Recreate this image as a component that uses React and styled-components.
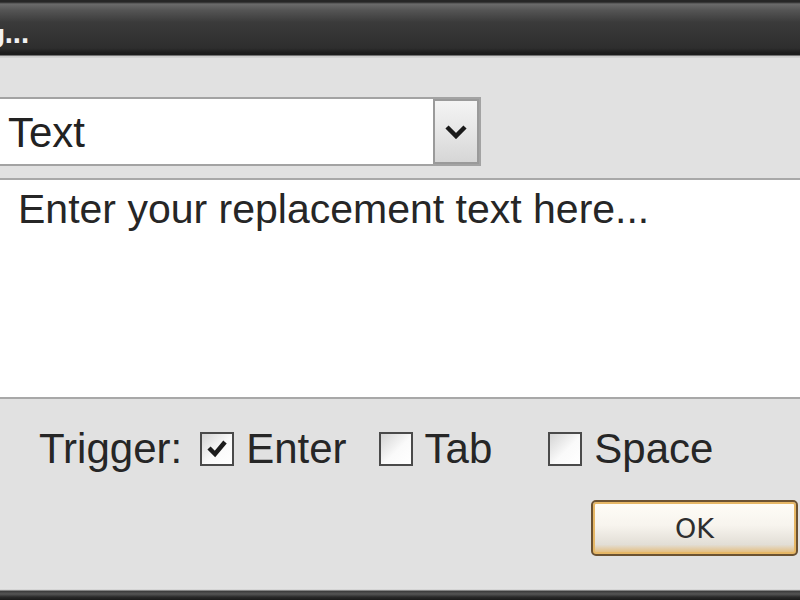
import React from 'react';
import styled, { createGlobalStyle } from 'styled-components';

const GlobalStyle = createGlobalStyle`
  html, body {
    margin: 0;
    padding: 0;
    background: #e1e1e1;
    overflow: hidden;
  }
  * {
    box-sizing: border-box;
  }
`;

const Window = styled.div`
  width: 800px;
  height: 600px;
  display: flex;
  flex-direction: column;
  overflow: hidden;
  background: #e1e1e1;
  font-family: 'Liberation Sans', Arial, sans-serif;
  color: #1e1e1e;
`;

const TitleBar = styled.div`
  height: 58px;
  flex: none;
  display: flex;
  align-items: center;
  padding-top: 12px;
  background: linear-gradient(
    to bottom,
    #262626 0px,
    #262626 2px,
    #6a6a6a 4px,
    #555 10px,
    #3b3b3b 22px,
    #2e2e2e 48px,
    #1c1c1c 53px,
    #1c1c1c 55px,
    #c9c9c9 56px,
    #d6d6d6 58px
  );
`;

const Title = styled.span`
  color: #f2f2f2;
  font-family: 'DejaVu Sans', sans-serif;
  font-weight: bold;
  font-size: 24px;
  margin-left: -12px;
  letter-spacing: -1px;
`;

const Body = styled.div`
  flex: 1;
  display: flex;
  flex-direction: column;
  padding-top: 39px;
`;

const Select = styled.div`
  width: 481px;
  height: 69px;
  display: flex;
  align-items: stretch;
  background: #fff;
  border: 2px solid #a3a3a3;
  border-left: none;
`;

const SelectValue = styled.div`
  flex: 1;
  display: flex;
  align-items: center;
  padding-left: 8px;
  padding-top: 2px;
  font-size: 42px;
  color: #222;
`;

const DropButton = styled.div`
  width: 46px;
  display: flex;
  align-items: center;
  justify-content: center;
  border: 2px solid #9a9a9a;
  background: linear-gradient(to bottom, #f4f4f4, #e6e6e6 50%, #d6d6d6);
`;

const TextArea = styled.div`
  margin-top: 12px;
  width: 820px;
  height: 221px;
  background: #fff;
  border: 2px solid #a8a8a8;
  border-left: none;
  padding: 6px 0 0 18px;
  font-size: 41px;
  color: #262626;
`;

const TriggerRow = styled.div`
  margin-top: 30px;
  display: flex;
  align-items: center;
  padding-left: 39px;
  font-size: 42px;
  color: #262626;
  height: 40px;
`;

const Label = styled.span`
  margin-right: ${(p) => p.$gap || 0}px;
`;

const Box = styled.span`
  width: 34px;
  height: 34px;
  flex: none;
  display: inline-flex;
  align-items: center;
  justify-content: center;
  border: 2px solid #4a4a4a;
  background: linear-gradient(135deg, #d4d4d4, #fafafa 55%, #ffffff);
  margin-right: 12px;
`;

const Footer = styled.div`
  margin-top: 31px;
  display: flex;
  justify-content: flex-end;
  padding-right: 2px;
`;

const OkButton = styled.div`
  width: 207px;
  height: 56px;
  border-radius: 5px;
  border: 2px solid #6b5232;
  box-shadow: inset 0 0 0 2px #e6b766;
  background: linear-gradient(to bottom, #fffdf7, #f7f4ee 45%, #e2ded6 82%, #e4b76e);
  display: flex;
  align-items: center;
  justify-content: center;
  font-family: 'DejaVu Sans', sans-serif;
  font-size: 27px;
  color: #2e2e2e;
`;

const BottomEdge = styled.div`
  margin-top: auto;
  height: 12px;
  flex: none;
  background: linear-gradient(
    to bottom,
    #e9e9e9 0px,
    #cfcfcf 2px,
    #3a3a3a 3px,
    #555 6px,
    #2a2a2a 9px,
    #1a1a1a 12px
  );
`;

const Chevron = () => (
  <svg width="22" height="14" viewBox="0 0 22 14">
    <path d="M2 2 L11 11 L20 2" fill="none" stroke="#1a1a1a" strokeWidth="4.5" strokeLinejoin="miter" />
  </svg>
);

const Check = () => (
  <svg width="24" height="22" viewBox="0 0 24 22">
    <path d="M4 10 L10 16 L20 4" fill="none" stroke="#1c1c1c" strokeWidth="4.5" />
  </svg>
);

const Checkbox = ({ checked }) => <Box>{checked && <Check />}</Box>;

export default function App() {
  return (
    <Window>
      <GlobalStyle />
      <TitleBar>
        <Title>g...</Title>
      </TitleBar>
      <Body>
        <Select>
          <SelectValue>Text</SelectValue>
          <DropButton>
            <Chevron />
          </DropButton>
        </Select>
        <TextArea>Enter your replacement text here...</TextArea>
        <TriggerRow>
          <Label $gap={18}>Trigger:</Label>
          <Checkbox checked />
          <Label $gap={32}>Enter</Label>
          <Checkbox />
          <Label $gap={56}>Tab</Label>
          <Checkbox />
          <Label>Space</Label>
        </TriggerRow>
        <Footer>
          <OkButton>OK</OkButton>
        </Footer>
        <BottomEdge />
      </Body>
    </Window>
  );
}
